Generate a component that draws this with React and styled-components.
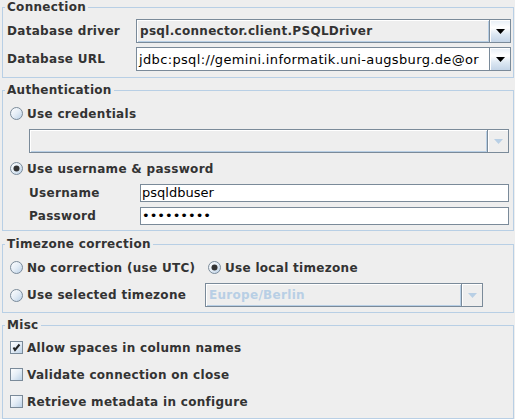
import React from "react";
import styled, { createGlobalStyle } from "styled-components";

const GlobalStyle = createGlobalStyle`
  html, body {
    margin: 0;
    padding: 0;
    background: #eeeeee;
  }
  body {
    font-family: "DejaVu Sans", "Liberation Sans", sans-serif;
    font-size: 12px;
    font-weight: bold;
    letter-spacing: 0.3px;
    color: #333333;
  }
`;

const Page = styled.div`
  display: flex;
  flex-direction: column;
  gap: 5px;
  padding: 0 1px 0 2px;
  width: 515px;
  box-sizing: border-box;
`;

const Group = styled.fieldset`
  margin: ${(p) => p.$space || 0}px 0 0 0;
  padding: 0;
  min-width: 0;
  border: 1px solid #b8cfe5;
`;

const Legend = styled.legend`
  padding: 0 2px;
  margin-left: 2px;
  line-height: 14px;
  font-weight: bold;
  color: #333333;
`;

const Body = styled.div`
  display: flex;
  flex-direction: column;
  gap: ${(p) => p.$gap || 4}px;
  padding: ${(p) => p.$top || 4}px 2px ${(p) => p.$bottom || 5}px 4px;
`;

const FormGrid = styled.div`
  display: grid;
  grid-template-columns: ${(p) => p.$label}px minmax(0, 1fr);
  row-gap: ${(p) => p.$gap}px;
  align-items: center;
  margin-left: ${(p) => p.$indent || 0}px;
  margin-right: ${(p) => p.$right || 0}px;
`;

const Label = styled.span`
  white-space: nowrap;
`;

const ComboBox = styled.div`
  display: flex;
  min-width: 0;
  height: 24px;
  box-sizing: border-box;
  border: 1px solid #7a8a99;
  margin-left: ${(p) => p.$indent || 0}px;
  margin-right: ${(p) => p.$right || 0}px;
`;

const ComboValue = styled.div`
  flex: 1;
  min-width: 0;
  display: flex;
  align-items: center;
  padding-left: ${(p) => (p.$editable ? 2 : 3)}px;
  background: ${(p) => (p.$editable ? "#ffffff" : "#eeeeee")};
  box-shadow: ${(p) =>
    p.$editable ? "none" : "inset 1px 1px 0 #ffffff, inset -1px -1px 0 #b8cfe5"};
  border-right: 1px solid #7a8a99;
  color: ${(p) => (p.$disabled ? "#b8cfe5" : p.$editable ? "#000000" : "#333333")};
  font-weight: ${(p) => (p.$editable ? "normal" : "bold")};
  font-size: ${(p) => (p.$editable ? 13 : 12)}px;
  letter-spacing: ${(p) => (p.$editable ? "0.35px" : "0.3px")};
  white-space: nowrap;
  overflow: hidden;
`;

const ArrowButton = styled.div`
  width: 20px;
  flex: none;
  display: flex;
  align-items: center;
  justify-content: center;
  background: ${(p) =>
    p.$disabled
      ? "#eeeeee"
      : "linear-gradient(#e6eef6 0%, #ffffff 35%, #dde8f3 65%, #c4d5e7 100%)"};
  box-shadow: inset 1px 1px 0 #ffffff;
`;

const TextField = styled.div`
  height: 18px;
  box-sizing: border-box;
  border: 1px solid #7a8a99;
  background: #ffffff;
  color: #000000;
  font-weight: normal;
  font-size: 13px;
  letter-spacing: 0;
  padding-left: 1px;
  line-height: 16px;
  white-space: nowrap;
  overflow: hidden;
`;

const Choice = styled.label`
  display: flex;
  align-items: center;
  gap: 4px;
  height: 23px;
  padding-left: 3px;
  white-space: nowrap;
`;

const TimezoneGrid = styled.div`
  display: grid;
  grid-template-columns: 198px 278px;
  row-gap: 4px;
  align-items: center;
`;

const Arrow = ({ disabled }) => (
  <svg width="9" height="5" viewBox="0 0 9 5">
    <polygon points="0,0 9,0 4.5,5" fill={disabled ? "#b8cfe5" : "#000000"} />
  </svg>
);

const Combo = ({ value, editable, disabled, indent, right }) => (
  <ComboBox $indent={indent} $right={right}>
    <ComboValue $editable={editable} $disabled={disabled}>
      {value}
    </ComboValue>
    <ArrowButton $disabled={disabled}>
      <Arrow disabled={disabled} />
    </ArrowButton>
  </ComboBox>
);

const Radio = ({ checked }) => (
  <svg width="13" height="13" viewBox="0 0 13 13">
    <defs>
      <linearGradient id="rg" x1="0" y1="0" x2="1" y2="1">
        <stop offset="0" stopColor="#ffffff" />
        <stop offset="0.5" stopColor="#e4edf6" />
        <stop offset="1" stopColor="#b8cfe5" />
      </linearGradient>
    </defs>
    <circle cx="6.5" cy="6.5" r="6" fill="url(#rg)" stroke="#7a8a99" strokeWidth="1" />
    {checked && <circle cx="6.5" cy="6.5" r="3" fill="#333333" />}
  </svg>
);

const Check = ({ checked }) => (
  <svg width="13" height="13" viewBox="0 0 13 13">
    <defs>
      <linearGradient id="cg" x1="0" y1="0" x2="1" y2="1">
        <stop offset="0" stopColor="#ffffff" />
        <stop offset="0.5" stopColor="#e4edf6" />
        <stop offset="1" stopColor="#b8cfe5" />
      </linearGradient>
    </defs>
    <rect x="0.5" y="0.5" width="12" height="12" fill="url(#cg)" stroke="#7a8a99" />
    {checked && (
      <path d="M3.5 6.5 L5 9 L9.5 3.5" fill="none" stroke="#222222" strokeWidth="2" />
    )}
  </svg>
);

const RadioItem = ({ checked, children }) => (
  <Choice>
    <Radio checked={checked} />
    {children}
  </Choice>
);

const CheckItem = ({ checked, children }) => (
  <Choice>
    <Check checked={checked} />
    {children}
  </Choice>
);

export default function App() {
  return (
    <>
      <GlobalStyle />
      <Page>
        <Group>
          <Legend>Connection</Legend>
          <Body $top={5} $bottom={6}>
            <FormGrid $label={129} $gap={4}>
              <Label>Database driver</Label>
              <Combo value="psql.connector.client.PSQLDriver" />
              <Label>Database URL</Label>
              <Combo
                editable
                value="jdbc:psql://gemini.informatik.uni-augsburg.de@or"
              />
            </FormGrid>
          </Body>
        </Group>

        <Group>
          <Legend>Authentication</Legend>
          <Body $top={5} $bottom={5}>
            <RadioItem>Use credentials</RadioItem>
            <Combo disabled value="" indent={22} right={2} />
            <RadioItem checked>Use username &amp; password</RadioItem>
            <FormGrid $label={111} $gap={5} $indent={22} $right={2}>
              <Label>Username</Label>
              <TextField>psqldbuser</TextField>
              <Label>Password</Label>
              <TextField>•••••••••</TextField>
            </FormGrid>
          </Body>
        </Group>

        <Group $space={1}>
          <Legend>Timezone correction</Legend>
          <Body $top={5} $bottom={5}>
            <TimezoneGrid>
              <RadioItem>No correction (use UTC)</RadioItem>
              <RadioItem checked>Use local timezone</RadioItem>
              <RadioItem>Use selected timezone</RadioItem>
              <Combo disabled value="Europe/Berlin" />
            </TimezoneGrid>
          </Body>
        </Group>

        <Group>
          <Legend>Misc</Legend>
          <Body $top={4} $bottom={5}>
            <CheckItem checked>Allow spaces in column names</CheckItem>
            <CheckItem>Validate connection on close</CheckItem>
            <CheckItem>Retrieve metadata in configure</CheckItem>
          </Body>
        </Group>
      </Page>
    </>
  );
}
